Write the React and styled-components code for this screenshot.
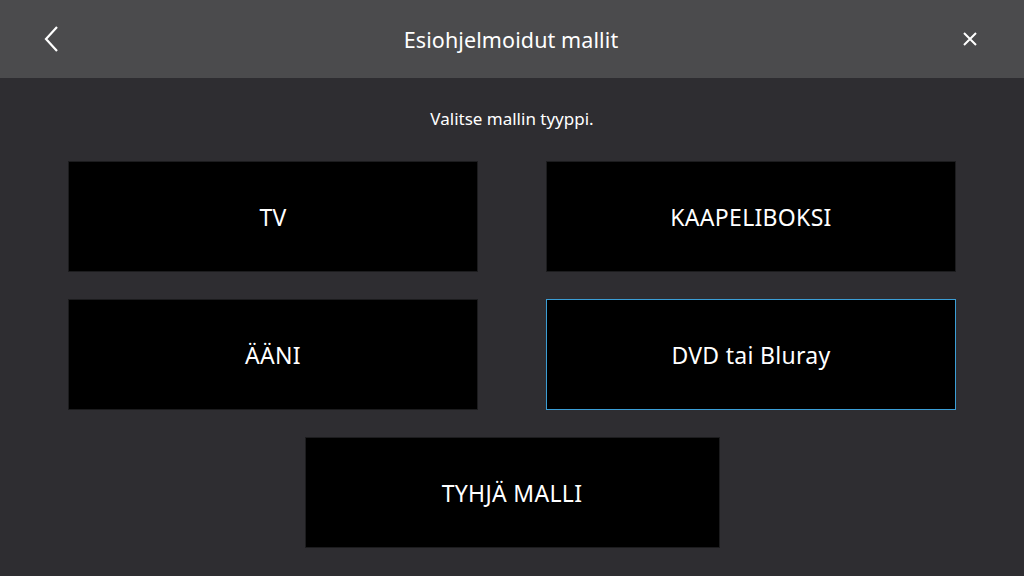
import styled, { createGlobalStyle } from 'styled-components';

const GlobalStyle = createGlobalStyle`
    html, body {
        margin: 0;
        padding: 0;
        background: #2e2d31;
    }
    body {
        font-family: 'Noto Sans', 'DejaVu Sans', sans-serif;
        color: #ffffff;
    }
`;

const Screen = styled.div`
    width: 1024px;
    height: 576px;
    display: flex;
    flex-direction: column;
    background: #2e2d31;
    overflow: hidden;
`;

const Header = styled.header`
    height: 78px;
    flex-shrink: 0;
    background: #4b4b4d;
    display: flex;
    align-items: center;
    justify-content: space-between;
    padding: 0 38px 0 36px;
`;

const IconButton = styled.button`
    width: 32px;
    height: 32px;
    padding: 0;
    border: none;
    background: none;
    display: flex;
    align-items: center;
    justify-content: center;
    color: #ffffff;
`;

const Title = styled.h1`
    margin: 0;
    font-size: 21.5px;
    font-weight: 400;
    letter-spacing: 0.1px;
`;

const Content = styled.main`
    flex: 1;
    display: flex;
    flex-direction: column;
    align-items: center;
    padding-top: 31px;
`;

const Subtitle = styled.p`
    margin: 0 0 32px;
    font-size: 17px;
    line-height: 20px;
`;

const Grid = styled.div`
    display: grid;
    grid-template-columns: 410px 410px;
    column-gap: 68px;
    row-gap: 27px;
`;

const Card = styled.button`
    height: 111px;
    width: ${(p) => (p.wide ? '415px' : '410px')};
    box-sizing: border-box;
    background: #000000;
    border: 1px solid ${(p) => (p.selected ? '#3b9ed6' : '#1c1c1e')};
    color: #ffffff;
    font-family: inherit;
    font-size: 23px;
    letter-spacing: 0.3px;
    display: flex;
    align-items: center;
    justify-content: center;
    padding: 0;
`;

const Bottom = styled.div`
    grid-column: 1 / span 2;
    display: flex;
    justify-content: center;
`;

const App = () => (
    <Screen>
        <GlobalStyle />
        <Header>
            <IconButton aria-label="Takaisin">
                <svg width="18" height="28" viewBox="0 0 18 28" fill="none">
                    <path d="M14 2 L3 14 L14 26" stroke="#fff" strokeWidth="2.2" />
                </svg>
            </IconButton>
            <Title>Esiohjelmoidut mallit</Title>
            <IconButton aria-label="Sulje">
                <svg width="16" height="16" viewBox="0 0 16 16" fill="none">
                    <path d="M2 2 L14 14 M14 2 L2 14" stroke="#fff" strokeWidth="2" />
                </svg>
            </IconButton>
        </Header>
        <Content>
            <Subtitle>Valitse mallin tyyppi.</Subtitle>
            <Grid>
                <Card>TV</Card>
                <Card>KAAPELIBOKSI</Card>
                <Card>ÄÄNI</Card>
                <Card selected>DVD tai Bluray</Card>
                <Bottom>
                    <Card wide>TYHJÄ MALLI</Card>
                </Bottom>
            </Grid>
        </Content>
    </Screen>
);

export default App;
